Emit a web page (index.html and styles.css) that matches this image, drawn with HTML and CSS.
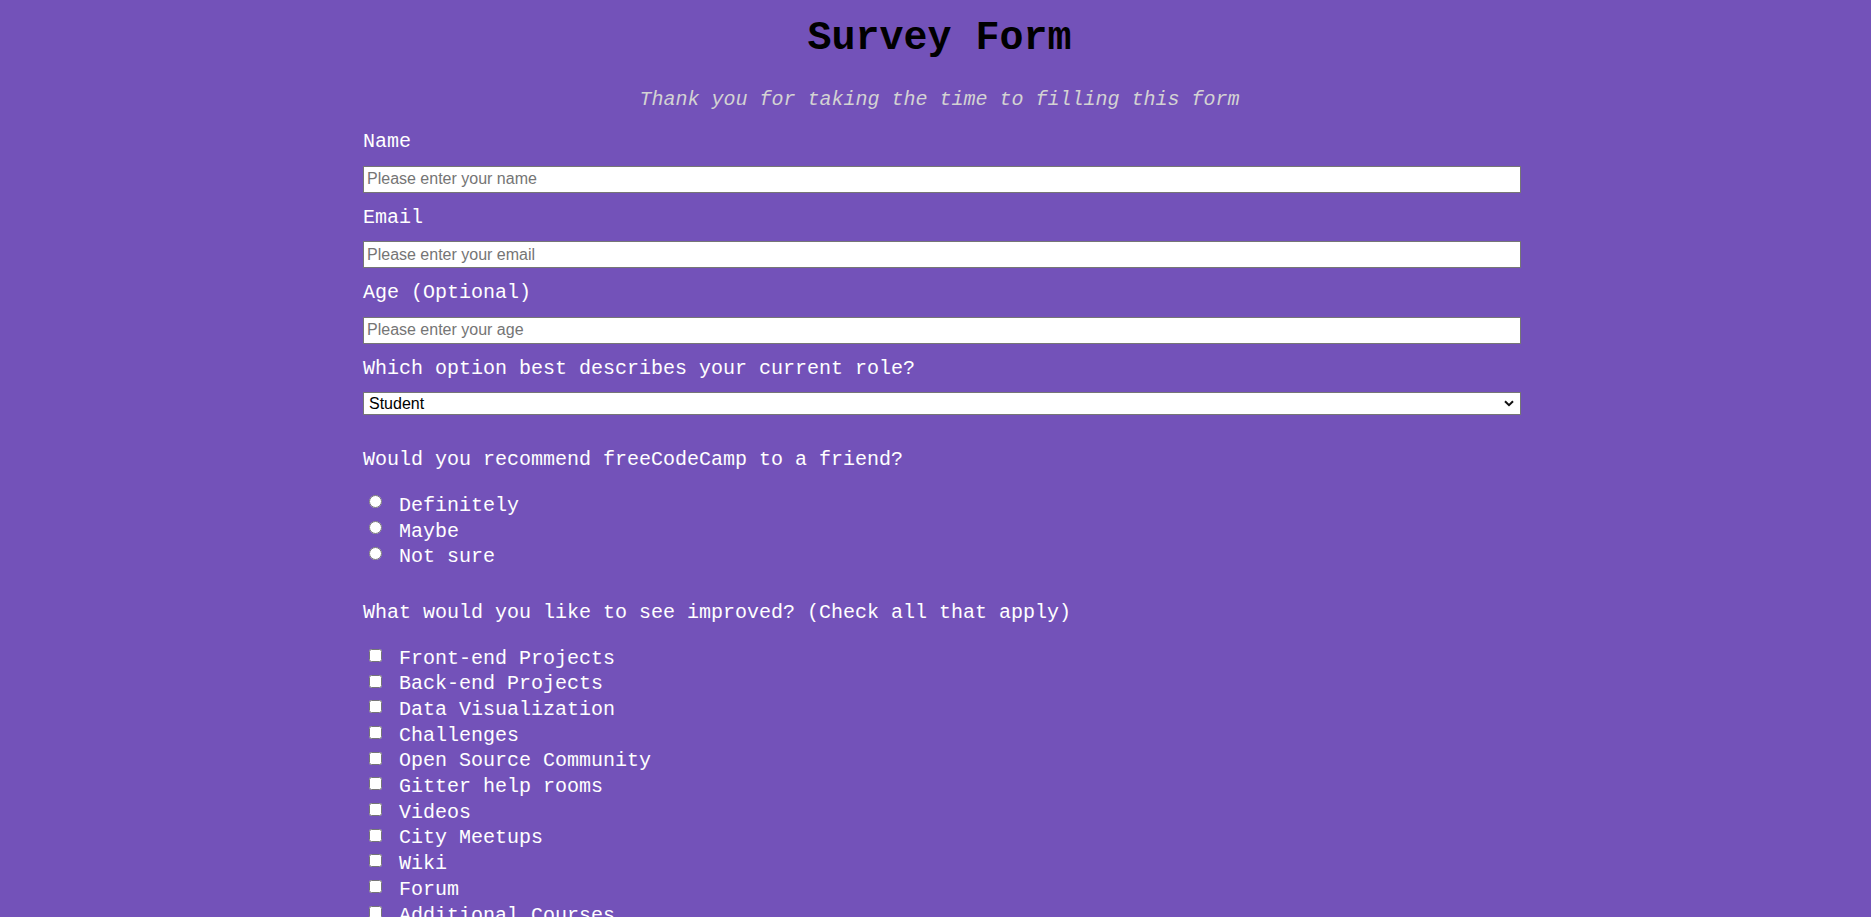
FILE: index.html
```html
<!DOCTYPE html>
<html lang="en">
<head>
<meta charset="utf-8">
<title>Survey Form</title>
<link rel="stylesheet" href="styles.css">
</head>
<body>
<div class="page">
  <main class="survey">
    <h1 class="title" id="title">Survey Form</h1>
    <p class="subtitle" id="description">Thank you for taking the time to filling this form</p>
    <form class="form" id="survey-form">
      <div class="field">
        <label class="field-label" for="name">Name</label>
        <input class="text-input" id="name" type="text" placeholder="Please enter your name">
      </div>
      <div class="field">
        <label class="field-label" for="email">Email</label>
        <input class="text-input" id="email" type="email" placeholder="Please enter your email">
      </div>
      <div class="field">
        <label class="field-label" for="number">Age (Optional)</label>
        <input class="text-input" id="number" type="number" placeholder="Please enter your age">
      </div>
      <div class="field">
        <label class="field-label" for="dropdown">Which option best describes your current role?</label>
        <div class="select-wrap">
          <select class="select" id="dropdown">
            <option>Student</option>
            <option>Full Time Job</option>
            <option>Full Time Learner</option>
            <option>Prefer not to say</option>
            <option>Other</option>
          </select>
          <svg class="chevron" width="10" height="7" viewBox="0 0 10 7" aria-hidden="true"><path d="M1 1.2 L5 5.2 L9 1.2" fill="none" stroke="#111" stroke-width="2"/></svg>
        </div>
      </div>

      <p class="group-label group-label--first">Would you recommend freeCodeCamp to a friend?</p>
      <div class="options">
        <label class="option"><input class="control control--radio" type="radio" name="recommend" value="definitely"><span class="option-text">Definitely</span></label>
        <label class="option"><input class="control control--radio" type="radio" name="recommend" value="maybe"><span class="option-text">Maybe</span></label>
        <label class="option"><input class="control control--radio" type="radio" name="recommend" value="not-sure"><span class="option-text">Not sure</span></label>
      </div>

      <p class="group-label">What would you like to see improved? (Check all that apply)</p>
      <div class="options">
        <label class="option"><input class="control" type="checkbox"><span class="option-text">Front-end Projects</span></label>
        <label class="option"><input class="control" type="checkbox"><span class="option-text">Back-end Projects</span></label>
        <label class="option"><input class="control" type="checkbox"><span class="option-text">Data Visualization</span></label>
        <label class="option"><input class="control" type="checkbox"><span class="option-text">Challenges</span></label>
        <label class="option"><input class="control" type="checkbox"><span class="option-text">Open Source Community</span></label>
        <label class="option"><input class="control" type="checkbox"><span class="option-text">Gitter help rooms</span></label>
        <label class="option"><input class="control" type="checkbox"><span class="option-text">Videos</span></label>
        <label class="option"><input class="control" type="checkbox"><span class="option-text">City Meetups</span></label>
        <label class="option"><input class="control" type="checkbox"><span class="option-text">Wiki</span></label>
        <label class="option"><input class="control" type="checkbox"><span class="option-text">Forum</span></label>
        <label class="option"><input class="control" type="checkbox"><span class="option-text">Additional Courses</span></label>
      </div>

      <p class="group-label">Any comments or suggestions?</p>
      <textarea class="comments" placeholder="Enter your comment here..."></textarea>
      <button class="submit" type="submit" id="submit">Submit</button>
    </form>
  </main>
</div>
</body>
</html>
```

FILE: styles.css
```css
html {
  scrollbar-width: none;
}

body {
  margin: 0;
  background: #7352b9;
  font-family: "Liberation Mono", "Courier New", monospace;
  color: #ffffff;
}

.page {
  display: flex;
  justify-content: center;
  padding-left: 13px;
}

.survey {
  width: 1158px;
  display: flex;
  flex-direction: column;
}

.title {
  margin: 0;
  padding: 16px 5px 0 0;
  font-size: 40px;
  line-height: 46px;
  font-weight: bold;
  color: #000000;
  text-align: center;
}

.subtitle {
  margin: 27px 0 0;
  padding-right: 5px;
  font-size: 20px;
  line-height: 22px;
  font-style: italic;
  color: #d3d3d3;
  text-align: center;
}

.form {
  display: flex;
  flex-direction: column;
  margin-top: 20px;
}

.field {
  display: flex;
  flex-direction: column;
  margin-bottom: 14px;
}

.field-label {
  font-size: 20px;
  line-height: 22px;
  margin-bottom: 12.5px;
}

.text-input {
  box-sizing: border-box;
  width: 100%;
  height: 27px;
  margin: 0;
  padding: 0 3px;
  border: 1px solid #767676;
  border-radius: 0;
  background: #ffffff;
  font-family: "Liberation Sans", Arial, sans-serif;
  font-size: 16px;
  color: #000000;
  outline: none;
  -moz-appearance: textfield;
}

.text-input::placeholder {
  color: #757575;
}

.text-input::-webkit-outer-spin-button,
.text-input::-webkit-inner-spin-button {
  -webkit-appearance: none;
  margin: 0;
}

.select-wrap {
  position: relative;
  display: flex;
}

.select {
  box-sizing: border-box;
  width: 100%;
  height: 23px;
  margin: 0;
  padding: 0 20px 0 5px;
  border: 1px solid #767676;
  border-radius: 0;
  background: #ffffff;
  font-family: "Liberation Sans", Arial, sans-serif;
  font-size: 16px;
  color: #000000;
  appearance: none;
  -webkit-appearance: none;
  outline: none;
}

.chevron {
  position: absolute;
  right: 7px;
  top: 8px;
  pointer-events: none;
}

.group-label {
  margin: 31.6px 0 0;
  font-size: 20px;
  line-height: 22px;
}

.group-label--first {
  margin-top: 20px;
}

.options {
  display: flex;
  flex-direction: column;
  margin-top: 22px;
}

.option {
  display: flex;
  align-items: flex-start;
  height: 25.7px;
  font-size: 20px;
  line-height: 25.7px;
}

.control {
  width: 13px;
  height: 13px;
  margin: 3.2px 0 0 6px;
  flex: none;
}

.control--radio {
  margin-top: 2.4px;
}

.option-text {
  margin-left: 17px;
}

.comments {
  margin-top: 20px;
  height: 100px;
  font-family: "Liberation Sans", Arial, sans-serif;
  font-size: 16px;
}

.submit {
  margin: 20px 0 40px;
  height: 40px;
  font-family: "Liberation Mono", monospace;
  font-size: 18px;
}
```
